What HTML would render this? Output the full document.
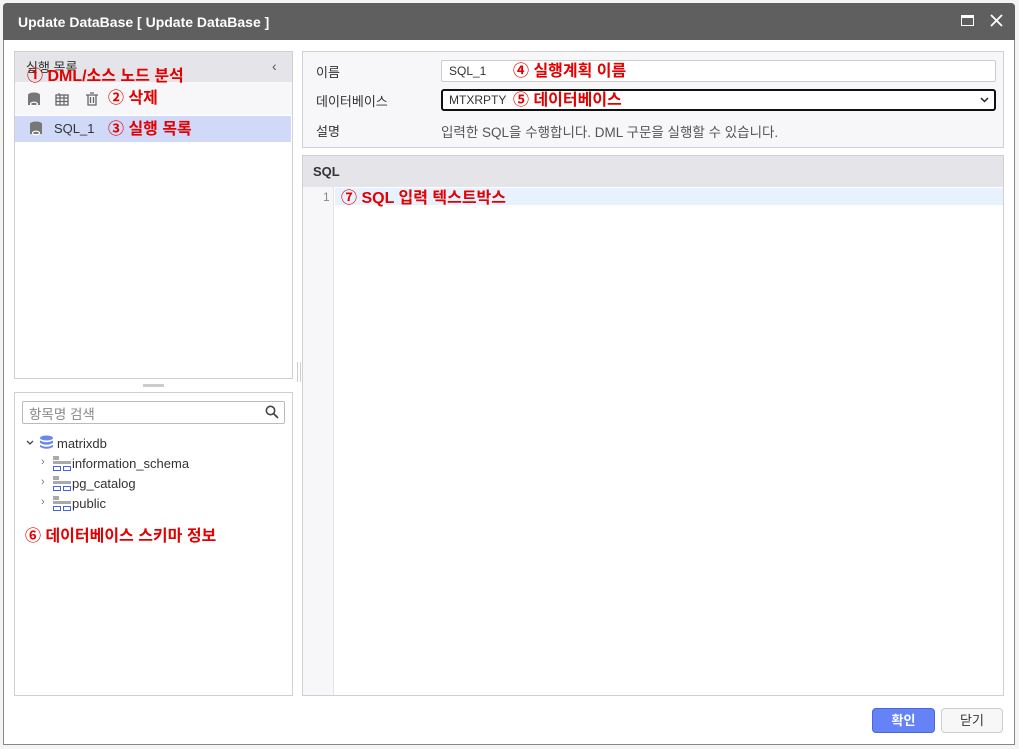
<!DOCTYPE html>
<html><head><meta charset="utf-8"><style>
*{box-sizing:border-box;margin:0;padding:0}
body{width:1019px;height:749px;background:#fff;font-family:"Liberation Sans","Noto Sans CJK KR",sans-serif;position:relative;overflow:hidden;font-size:13px;color:#333}
.abs{position:absolute}
.dlg{left:3px;top:3px;width:1012px;height:742px;border:1px solid #888;background:#fff;border-radius:4px 4px 0 0}
.title{left:3px;top:3px;width:1012px;height:37px;background:#5f5f5f;border-radius:4px 4px 0 0;color:#fff;font-weight:bold;font-size:14px;padding:11px 0 0 15px}
.red{color:#e30000;font-weight:bold;font-size:16px;line-height:18px}
.panel{border:1px solid #cfcfd4}
</style></head><body>
<div class="abs" style="left:0;top:0;width:1019px;height:749px;background:#f4f4f4"></div>
<div class="abs dlg"></div>
<div class="abs title">Update DataBase [ Update DataBase ]</div>
<div class="abs" style="left:961px;top:15px;width:13px;height:11px;border:1.5px solid #fff;border-top-width:3px"></div>
<svg class="abs" style="left:990px;top:14px" width="13" height="13"><path d="M1 1L12 12M12 1L1 12" stroke="#fff" stroke-width="1.8"/></svg>

<div class="abs panel" style="left:14px;top:51px;width:279px;height:328px;background:#fff"></div>
<div class="abs" style="left:15px;top:52px;width:277px;height:30px;background:#e4e4e9"></div>
<div class="abs" style="left:26px;top:57px;font-size:13px;color:#333">실행 목록</div>
<div class="abs" style="left:272px;top:58px;color:#555;font-size:14px">‹</div>
<div class="abs" style="left:15px;top:82px;width:277px;height:33px;background:#f7f7f9"></div>
<div class="abs red" style="left:27px;top:68px">① DML/소스 노드 분석</div>
<svg class="abs" style="left:27px;top:92px" width="14" height="15"><ellipse cx="7" cy="3" rx="6" ry="2.5" fill="#777"/><rect x="1" y="3" width="12" height="10" fill="#777"/><ellipse cx="7" cy="12" rx="3.5" ry="1.8" fill="none" stroke="#fff" stroke-width="1.2"/></svg>
<svg class="abs" style="left:55px;top:92px" width="14" height="14"><rect x="1" y="3" width="12" height="10" fill="none" stroke="#666" stroke-width="1.3"/><path d="M1 6H13M1 9.5H13M5 3V13M9 3V13M4 1V3" stroke="#666" stroke-width="1.2"/></svg>
<svg class="abs" style="left:85px;top:92px" width="14" height="14"><path d="M1 3H13M5 1H9M3 3V13H11V3M5.5 5V11M8.5 5V11" fill="none" stroke="#666" stroke-width="1.3"/></svg>
<div class="abs red" style="left:108px;top:90px">② 삭제</div>
<div class="abs" style="left:15px;top:116px;width:276px;height:26px;background:#d0daf8"></div>
<svg class="abs" style="left:29px;top:121px" width="14" height="15"><ellipse cx="7" cy="3" rx="6" ry="2.5" fill="#777"/><rect x="1" y="3" width="12" height="10" fill="#777"/><ellipse cx="7" cy="12" rx="3.5" ry="1.8" fill="none" stroke="#fff" stroke-width="1.2"/></svg>
<div class="abs" style="left:54px;top:121px">SQL_1</div>
<div class="abs red" style="left:108px;top:121px">③ 실행 목록</div>
<div class="abs" style="left:143px;top:384px;width:21px;height:3px;background:#ccc"></div>
<div class="abs" style="left:297px;top:362px;width:4px;height:20px;border-left:1px solid #ccc;border-right:1px solid #ccc"></div>

<div class="abs panel" style="left:14px;top:392px;width:279px;height:304px;background:#fff"></div>
<div class="abs" style="left:22px;top:401px;width:263px;height:23px;border:1px solid #bbb;border-radius:2px"></div>
<div class="abs" style="left:29px;top:403px;color:#888;font-size:13.5px">항목명 검색</div>
<svg class="abs" style="left:265px;top:405px" width="14" height="14"><circle cx="5.5" cy="5.5" r="4.2" fill="none" stroke="#444" stroke-width="1.6"/><path d="M8.5 8.5L13 13" stroke="#444" stroke-width="1.8"/></svg>
<svg class="abs" style="left:26px;top:440px" width="8" height="6"><path d="M1 1L4 4L7 1" fill="none" stroke="#444" stroke-width="1.3"/></svg>
<svg class="abs" style="left:39px;top:435px" width="15" height="15"><ellipse cx="7.5" cy="3" rx="6.5" ry="2.5" fill="#6a88e8"/><path d="M1 5.5Q7.5 9 14 5.5V8Q7.5 11.5 1 8Z M1 10Q7.5 13.5 14 10V12Q7.5 15.5 1 12Z" fill="#6a88e8"/></svg>
<div class="abs" style="left:57px;top:436px">matrixdb</div>
<div class="abs" style="left:41px;top:456px;color:#777;font-size:11px">›</div>
<div class="abs" style="left:41px;top:476px;color:#777;font-size:11px">›</div>
<div class="abs" style="left:41px;top:496px;color:#777;font-size:11px">›</div>
<svg class="abs" style="left:53px;top:456px" width="18" height="16"><rect x="0" y="0" width="6" height="4" fill="#aaa"/><rect x="0" y="5" width="18" height="3" fill="#aaa"/><rect x="0.5" y="10.5" width="7" height="4" fill="none" stroke="#4466dd"/><rect x="10.5" y="10.5" width="7" height="4" fill="none" stroke="#4466dd"/></svg>
<svg class="abs" style="left:53px;top:476px" width="18" height="16"><rect x="0" y="0" width="6" height="4" fill="#aaa"/><rect x="0" y="5" width="18" height="3" fill="#aaa"/><rect x="0.5" y="10.5" width="7" height="4" fill="none" stroke="#4466dd"/><rect x="10.5" y="10.5" width="7" height="4" fill="none" stroke="#4466dd"/></svg>
<svg class="abs" style="left:53px;top:496px" width="18" height="16"><rect x="0" y="0" width="6" height="4" fill="#aaa"/><rect x="0" y="5" width="18" height="3" fill="#aaa"/><rect x="0.5" y="10.5" width="7" height="4" fill="none" stroke="#4466dd"/><rect x="10.5" y="10.5" width="7" height="4" fill="none" stroke="#4466dd"/></svg>
<div class="abs" style="left:72px;top:456px">information_schema</div>
<div class="abs" style="left:72px;top:476px">pg_catalog</div>
<div class="abs" style="left:72px;top:496px">public</div>
<div class="abs red" style="left:25px;top:528px">⑥ 데이터베이스 스키마 정보</div>

<div class="abs panel" style="left:302px;top:51px;width:702px;height:97px;background:#f7f7f9"></div>
<div class="abs" style="left:316px;top:62px">이름</div>
<div class="abs" style="left:316px;top:91px">데이터베이스</div>
<div class="abs" style="left:316px;top:121px">설명</div>
<div class="abs" style="left:441px;top:60px;width:555px;height:22px;background:#fff;border:1px solid #ccc;border-radius:2px"></div>
<div class="abs" style="left:449px;top:64px;font-size:12px">SQL_1</div>
<div class="abs red" style="left:513px;top:63px">④ 실행계획 이름</div>
<div class="abs" style="left:441px;top:89px;width:555px;height:22px;background:#fff;border:2px solid #111;border-radius:3px"></div>
<div class="abs" style="left:449px;top:93px;font-size:12px">MTXRPTY</div>
<div class="abs red" style="left:513px;top:92px">⑤ 데이터베이스</div>
<svg class="abs" style="left:980px;top:97px" width="9" height="6"><path d="M1 1L4.5 4.5L8 1" fill="none" stroke="#222" stroke-width="1.5"/></svg>
<div class="abs" style="left:441px;top:121px;color:#555;font-size:13.5px">입력한 SQL을 수행합니다. DML 구문을 실행할 수 있습니다.</div>

<div class="abs panel" style="left:302px;top:155px;width:702px;height:541px;background:#fff"></div>
<div class="abs" style="left:303px;top:156px;width:700px;height:31px;background:#e4e4e9"></div>
<div class="abs" style="left:313px;top:164px;font-weight:bold;font-size:13px">SQL</div>
<div class="abs" style="left:303px;top:187px;width:31px;height:508px;background:#f7f7f9;border-right:1px solid #e4e4e4"></div>
<div class="abs" style="left:323px;top:190px;font-size:12px;color:#888">1</div>
<div class="abs" style="left:335px;top:188px;width:668px;height:17px;background:#e8f2ff"></div>
<div class="abs red" style="left:341px;top:190px">⑦ SQL 입력 텍스트박스</div>

<div class="abs" style="left:872px;top:708px;width:63px;height:25px;background:#6582f6;border:1px solid #4a66d8;border-radius:4px;color:#fff;font-weight:bold;text-align:center;line-height:23px">확인</div>
<div class="abs" style="left:941px;top:708px;width:62px;height:25px;background:#f7f7f7;border:1px solid #ccc;border-radius:4px;color:#333;text-align:center;line-height:23px">닫기</div>
</body></html>
